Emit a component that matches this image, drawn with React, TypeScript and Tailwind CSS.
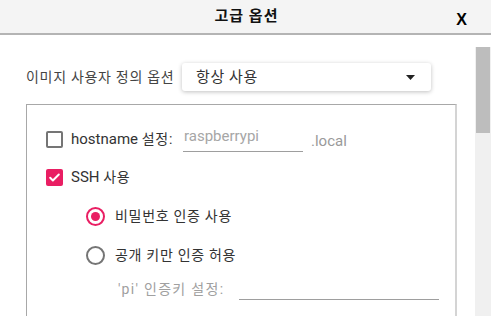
import React from "react";

const font = { fontFamily: "Roboto, 'Noto Sans CJK KR', sans-serif" };

function Checkbox({ checked }: { checked?: boolean }) {
  if (checked) {
    return (
      <div className="w-[17px] h-[17px] rounded-[2px] bg-[#e91e63] flex items-center justify-center shrink-0">
        <svg width="13" height="13" viewBox="0 0 24 24">
          <path d="M4 12.5l5 5L20 6.5" fill="none" stroke="#fff" strokeWidth="3.6" strokeLinecap="round" strokeLinejoin="round" />
        </svg>
      </div>
    );
  }
  return <div className="w-[17px] h-[17px] rounded-[2px] border-2 border-[#757575] bg-white shrink-0" />;
}

function Radio({ checked }: { checked?: boolean }) {
  return (
    <div
      className={
        "w-[19px] h-[19px] rounded-full border-2 flex items-center justify-center shrink-0 " +
        (checked ? "border-[#e91e63]" : "border-[#757575]")
      }
    >
      {checked && <div className="w-[9px] h-[9px] rounded-full bg-[#e91e63]" />}
    </div>
  );
}

export default function App() {
  return (
    <div className="w-[491px] h-[316px] overflow-hidden bg-white flex flex-col text-[#3a3a3a]" style={font}>
      <div className="h-[35px] shrink-0 bg-[#f4f4f4] border-b-2 border-[#b4b4b4] flex items-center relative">
        <div className="flex-1 text-center text-[15px] font-semibold tracking-[1px] text-[#111] pl-[2px]">고급 옵션</div>
        <div className="absolute right-[24px] top-[8px] text-[16px] font-bold text-black" style={{ fontFamily: "'Liberation Sans', Arial, sans-serif" }}>
          X
        </div>
      </div>

      <div className="flex flex-1 min-h-0">
        <div className="flex-1 pt-[28px]">
          <div className="flex items-center h-[28px] pl-[26px]">
            <div className="w-[156px] text-[14px] tracking-[0.7px] text-[#444]">이미지 사용자 정의 옵션</div>
            <div className="w-[249px] h-[28px] rounded-[3px] bg-white shadow-[0_1px_4px_rgba(0,0,0,0.25)] flex items-center pl-[14px] pr-[16px]">
              <span className="flex-1 text-[15px] tracking-[0.6px] text-[#333]">항상 사용</span>
              <svg width="9" height="5" viewBox="0 0 9 5">
                <path d="M0 0h9L4.5 5z" fill="#222" />
              </svg>
            </div>
          </div>

          <div className="mt-[13px] ml-[26px] w-[431px] h-[260px] border-t border-l border-[#a8a8a8] border-r-2 border-r-[#d4d4d4] pt-[15px] pl-[19px]">
            <div className="flex items-center h-[38px]">
              <Checkbox />
              <div className="w-[112px] ml-[8px] text-[15px] text-[#333]">
                hostname <span className="text-[14px] tracking-[0.7px]">설정:</span>
              </div>
              <div className="w-[120px] h-[26px] border-b border-[#9e9e9e] flex items-start pl-[1px] text-[15px] text-[#a6a6a6] leading-[20px]">
                raspberrypi
              </div>
              <div className="ml-[8px] text-[15px] text-[#9a9a9a] mt-[4px]">.local</div>
            </div>

            <div className="flex items-center h-[38px]">
              <Checkbox checked />
              <div className="ml-[8px] text-[15px] text-[#333]">
                SSH <span className="text-[14px] tracking-[0.7px]">사용</span>
              </div>
            </div>

            <div className="flex items-center h-[40px] pl-[40px]">
              <Radio checked />
              <div className="ml-[10px] text-[14px] tracking-[0.7px] text-[#333]">비밀번호 인증 사용</div>
            </div>

            <div className="flex items-center h-[38px] pl-[40px]">
              <Radio />
              <div className="ml-[10px] text-[14px] tracking-[0.7px] text-[#333]">공개 키만 인증 허용</div>
            </div>

            <div className="flex items-center h-[30px] pl-[72px]">
              <div className="w-[121px] text-[14px] tracking-[1.3px] text-[#a0a0a0]">'pi' 인증키 설정:</div>
              <div className="w-[200px] h-[20px] border-b border-[#9e9e9e] mt-[1px]" />
            </div>
          </div>
        </div>

        <div className="w-[16px] shrink-0 flex flex-col pt-[12px]">
          <div className="flex-1 bg-[#f0f0f0] px-[1px]">
            <div className="h-[86px] bg-[#bdbdbd]" />
          </div>
        </div>
      </div>
    </div>
  );
}
